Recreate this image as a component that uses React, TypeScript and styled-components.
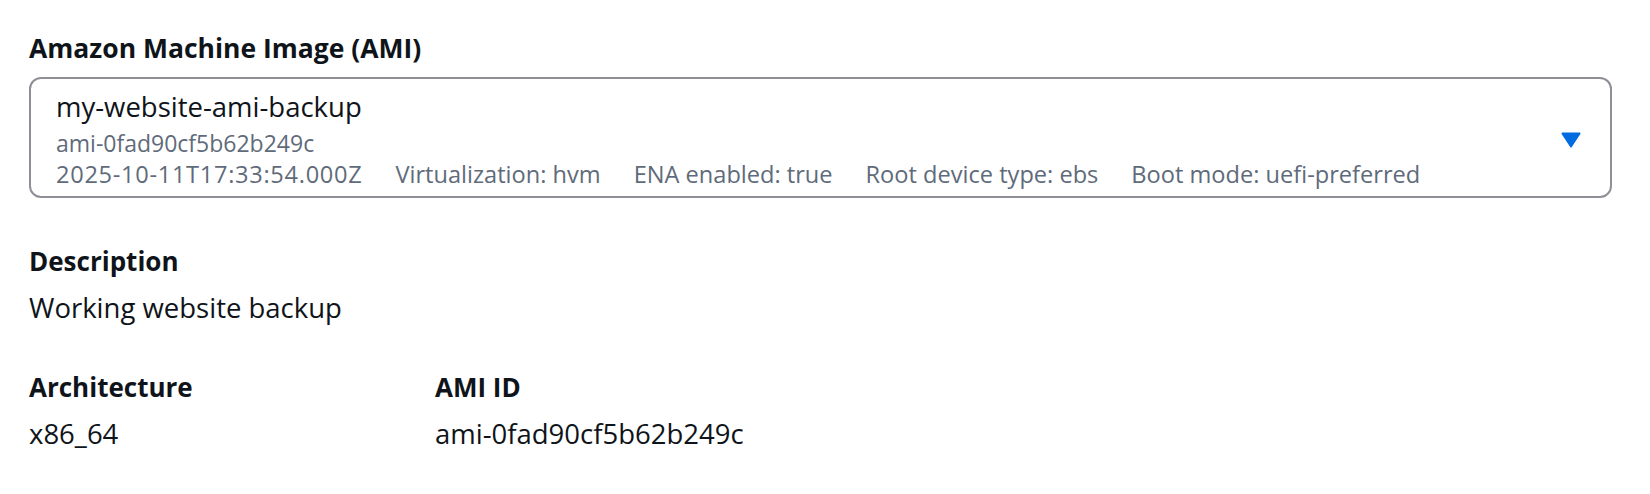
import React from "react";
import styled, { createGlobalStyle } from "styled-components";

const Global = createGlobalStyle`
  html, body { margin: 0; padding: 0; background: #ffffff; }
  body { font-family: "Open Sans", "Noto Sans", Arial, sans-serif; color: #000716; }
`;

const Page = styled.div`
  padding: 33px 38px 0 29px;
  display: flex;
  flex-direction: column;
`;

const FieldLabel = styled.div`
  font-size: 26.5px;
  font-weight: 700;
  line-height: 30px;
  color: #0f141a;
`;

const SelectBox = styled.div`
  margin-top: 14px;
  border: 2px solid #8f8f97;
  border-radius: 12px;
  padding: 11px 29px 6px 25px;
  display: flex;
  align-items: center;
  height: 121px;
  box-sizing: border-box;
`;

const OptionBody = styled.div`
  flex: 1;
  display: flex;
  flex-direction: column;
`;

const OptionTitle = styled.div`
  font-size: 27.5px;
  line-height: 34px;
  color: #0f141a;
`;

const OptionSub = styled.div`
  font-size: 23px;
  line-height: 32px;
  color: #5f6b7a;
  margin-top: 3px;
`;

const MetaRow = styled.div`
  display: flex;
  gap: 33px;
  font-size: 23.6px;
  line-height: 31px;
  color: #5f6b7a;
`;

const MetaItem = styled.span<{ $wide?: boolean }>`
  letter-spacing: ${(p) => (p.$wide ? "0.7px" : "0")};
`;

const Caret = styled.svg`
  width: 20px;
  height: 16px;
  flex: none;
`;

const Details = styled.div`
  margin-top: 47px;
  display: grid;
  grid-template-columns: 406px 1fr;
  row-gap: 47px;
`;

const Pair = styled.div<{ $full?: boolean }>`
  display: flex;
  flex-direction: column;
  gap: 15px;
  grid-column: ${(p) => (p.$full ? "1 / -1" : "auto")};
`;

const Key = styled.div`
  font-size: 26px;
  font-weight: 700;
  line-height: 32px;
  color: #0f141a;
`;

const Value = styled.div`
  font-size: 27.5px;
  line-height: 32px;
  color: #0f141a;
`;

const meta = [
  "2025-10-11T17:33:54.000Z",
  "Virtualization: hvm",
  "ENA enabled: true",
  "Root device type: ebs",
  "Boot mode: uefi-preferred",
];

export default function App() {
  return (
    <>
      <Global />
      <Page>
        <FieldLabel>Amazon Machine Image (AMI)</FieldLabel>
        <SelectBox>
          <OptionBody>
            <OptionTitle>my-website-ami-backup</OptionTitle>
            <OptionSub>ami-0fad90cf5b62b249c</OptionSub>
            <MetaRow>
              {meta.map((m, i) => (
                <MetaItem key={m} $wide={i === 0}>
                  {m}
                </MetaItem>
              ))}
            </MetaRow>
          </OptionBody>
          <Caret viewBox="0 0 20 16" aria-hidden>
            <path
              d="M1.5 1.5 H18.5 L10 14.5 Z"
              fill="#006ce0"
              stroke="#006ce0"
              strokeWidth="2"
              strokeLinejoin="round"
            />
          </Caret>
        </SelectBox>
        <Details>
          <Pair $full>
            <Key>Description</Key>
            <Value>Working website backup</Value>
          </Pair>
          <Pair>
            <Key>Architecture</Key>
            <Value>x86_64</Value>
          </Pair>
          <Pair>
            <Key>AMI ID</Key>
            <Value>ami-0fad90cf5b62b249c</Value>
          </Pair>
        </Details>
      </Page>
    </>
  );
}
